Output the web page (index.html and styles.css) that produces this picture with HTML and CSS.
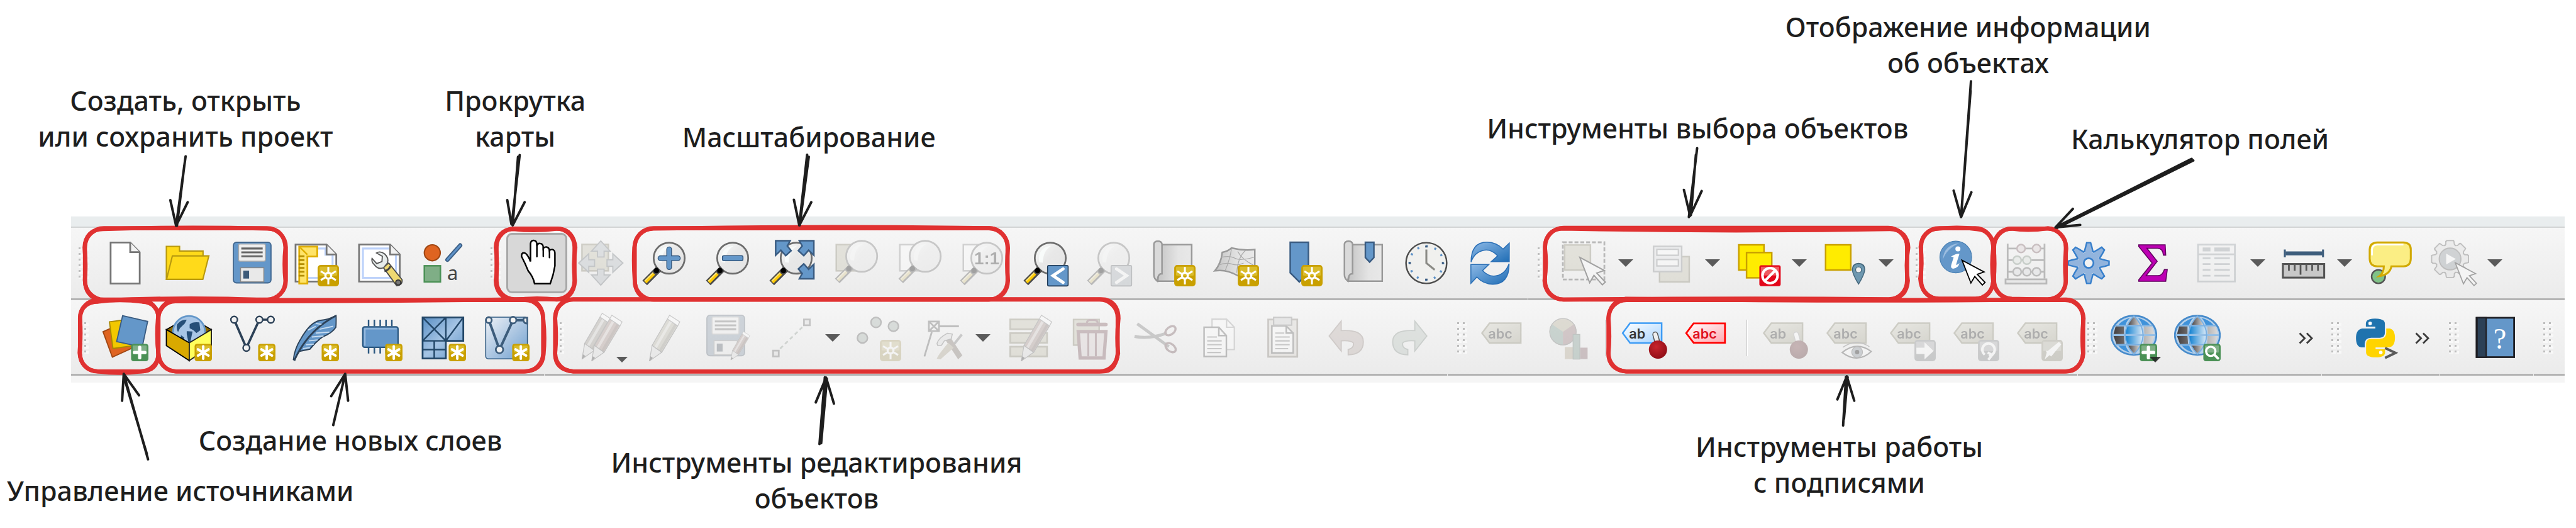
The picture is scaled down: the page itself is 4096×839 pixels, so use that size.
FILE: index.html
```html
<!DOCTYPE html>
<html lang="ru">
<head>
<meta charset="utf-8">
<title>Панели инструментов</title>
<link rel="stylesheet" href="styles.css">
</head>
<body>
<svg class="sprite" aria-hidden="true">
  <defs>
    <linearGradient id="g-lens" x1="0" y1="0" x2="1" y2="1"><stop offset="0" stop-color="#fafcfb"/><stop offset=".45" stop-color="#e8e8e8"/><stop offset="1" stop-color="#e4e4e4"/></linearGradient>
    <linearGradient id="g-sheet" x1="0" y1="0" x2="1" y2="0"><stop offset="0" stop-color="#c4c4c4"/><stop offset=".6" stop-color="#e4e4e4"/><stop offset="1" stop-color="#e8e8e8"/></linearGradient>
    <linearGradient id="g-blue" x1="0" y1="0" x2="1" y2="1"><stop offset="0" stop-color="#5a8fc4"/><stop offset=".5" stop-color="#a5c4e4"/><stop offset="1" stop-color="#6497c9"/></linearGradient>
    <linearGradient id="g-gpx" x1="0" y1="0" x2="1" y2="1"><stop offset="0" stop-color="#eef1f6"/><stop offset="1" stop-color="#6f9fcf"/></linearGradient>
    <linearGradient id="g-cell" x1="0" y1="0" x2="1" y2="0"><stop offset="0" stop-color="#0f7fd0"/><stop offset="1" stop-color="#d8e8f6"/></linearGradient>
    <linearGradient id="g-dark" x1="0" y1="0" x2="1" y2="0"><stop offset="0" stop-color="#433f40"/><stop offset="1" stop-color="#dcdcdc"/></linearGradient>
    <linearGradient id="g-arrow" x1="0" y1="0" x2="1" y2="1"><stop offset="0" stop-color="#8db9e6"/><stop offset="1" stop-color="#1f6db5"/></linearGradient>
    <linearGradient id="g-ab" x1="0" y1="0" x2="1" y2="1"><stop offset="0" stop-color="#ffffff"/><stop offset="1" stop-color="#a8d4ff"/></linearGradient>
    <linearGradient id="g-red" x1="0" y1="0" x2="1" y2="1"><stop offset="0" stop-color="#ffffff"/><stop offset="1" stop-color="#ffa8b0"/></linearGradient>
    <linearGradient id="g-tag" x1="0" y1="0" x2="1" y2="1"><stop offset="0" stop-color="#d4d2a8"/><stop offset="1" stop-color="#a8a060"/></linearGradient>
    <radialGradient id="g-ball" cx=".4" cy=".35" r=".7"><stop offset="0" stop-color="#c8242c"/><stop offset="1" stop-color="#8e0d16"/></radialGradient>
  </defs>

  <symbol id="badge-gear" viewBox="0 0 11 11">
    <rect width="11" height="11" rx="1.6" fill="#c9a000"/><rect x=".9" y=".9" width="9.2" height="4.6" rx=".6" fill="#dabc2b"/>
    <g stroke="#fff" stroke-width="1" fill="none"><circle cx="5.5" cy="5.5" r="1.5" stroke-width="1.1"/><path d="M5.5 1v2.6M5.5 7.4V10M1.6 3.2l2.3 1.4M7.1 6.4l2.3 1.4M9.4 3.2L7.1 4.6M3.9 6.4L1.6 7.8"/></g>
  </symbol>
  <symbol id="badge-star" viewBox="0 0 9 9">
    <rect width="9" height="9" rx="1.4" fill="#c9a000"/><rect x=".9" y=".9" width="7.2" height="3.6" rx=".5" fill="#dabc2b"/>
    <g stroke="#fff" stroke-width="1.3" stroke-linecap="round"><path d="M4.5 1.3v6.4M1.8 2.9l5.4 3.2M7.2 2.9L1.8 6.1"/></g>
  </symbol>
  <symbol id="badge-green" viewBox="0 0 9 9"><rect width="9" height="9" rx="1.4" fill="#4b9156"/><rect x=".9" y=".9" width="7.2" height="3.6" rx=".4" fill="#80b088"/></symbol>
  <symbol id="badge-plain" viewBox="0 0 11 11"><rect width="11" height="11" rx="1.6" fill="#7a8086"/><rect x=".9" y=".9" width="9.2" height="4.8" rx=".5" fill="#a4a9ad"/></symbol>
  <symbol id="lens" viewBox="0 0 24 24">
    <circle cx="14.6" cy="9.5" r="8" fill="url(#g-lens)" stroke="#6d6d6d" stroke-width=".9"/>
    <path d="M8.9 11.5C8 6.5 11 3.4 15 3.2 12.500 5 11 6.800 10.700 11.800Z" fill="#f8fbfa"/>
    <path d="M9.300 14.900L2 22.200" stroke="#4c4c4c" stroke-width="3.400"/><path d="M6.700 17.400L2.300 21.800" stroke="#ffcb05" stroke-width="1.800"/><path d="M6.300 17L2 21.300" stroke="#ffe680" stroke-width=".6"/><circle cx="8" cy="15.900" r="1.400"/>
  </symbol>
  <symbol id="cursor" viewBox="0 0 13 14"><path d="M.6.500L5.200 12.300 7.200 8.900 11.100 13.300 12.500 12 8.500 7.800 12 6.600Z" fill="#fff" stroke="#000" stroke-width=".6"/></symbol>
  <symbol id="scroll" viewBox="0 0 24 24">
    <path d="M6.500 2.500H22V21.300H4.500Z" fill="url(#g-sheet)" stroke="#999" stroke-width=".8"/>
    <path d="M2.500 2.200Q2.700.700 4.600.700T6.700 2.200V17.500Q4.500 17.300 4.300 21.300 2.500 20 2.500 18Z" fill="#dadada" stroke="#999" stroke-width=".8"/>
  </symbol>
  <symbol id="pencil" viewBox="0 0 24 24">
    <path d="M7.400 23.900L8.800 15.800 13.800 19.400Z" fill="#ddd" stroke="#666" stroke-width=".4"/>
    <path d="M8.800 15.800L16.700 2.200 22 5.800 13.800 19.400Z" fill="currentColor" stroke="#666" stroke-width=".4"/>
    <path d="M10.600 16.900L18.500 3.400" stroke="#fff" stroke-opacity=".5" stroke-width="1.400"/><path d="M13 18.600L21 5" stroke="#000" stroke-opacity=".2" stroke-width="1.400"/>
    <path d="M16.700 2.200L17.800.300 23.100 3.700 22 5.800Z" fill="#fff" stroke="#777" stroke-width=".4"/><path d="M7.400 23.900l.5-2.500 1.300.9z" fill="#333"/>
  </symbol>
  <symbol id="disk" viewBox="0 0 24 24">
    <rect x="2.300" y="1.300" width="19.400" height="20.900" rx="1.600" fill="#6497c9" stroke="#416891" stroke-width=".6"/>
    <rect x="5" y="2.200" width="13.800" height="8.800" rx=".7" fill="#eee" stroke="#aaa" stroke-width=".5"/><path d="M6.400 4.500h11M6.400 6.500h11M6.400 8.500h11" stroke="#666"/>
    <rect x="6" y="14.400" width="12" height="7.300" fill="#e9e9e9" stroke="#888" stroke-width=".5"/><rect x="7.400" y="15.900" width="3" height="4.100" fill="#3d5a78"/>
  </symbol>
  <symbol id="tag" viewBox="0 0 24 24"><path d="M.8 9.500L4.700 4.400H20.800V14.600H4.700Z" fill="url(#g-tag)" stroke="#87803e" stroke-width=".8"/></symbol>
  <symbol id="globe" viewBox="0 0 24 24">
    <ellipse cx="12" cy="10.600" rx="11.600" ry="10.100" fill="#b5d0ea" stroke="#478bcb" stroke-width=".9"/>
    <path d="M7.900 5.900H16.400V10H7.600ZM7.600 11H16.600V15.200H8Z" fill="url(#g-cell)"/>
    <path d="M2.600 6H6.900V10H1.500ZM1.500 11H6.900L7.200 15.200H3ZM17.200 6H21.300L22.600 10H17.400ZM17.300 11H22.600L21.200 15.200H17Z" fill="url(#g-dark)"/>
    <path d="M12 1.300Q14.500 3 15 5.300H8.800Q9.800 2.800 12 1.300ZM8.900 16H15.300Q14 18.500 12 19.800 10 18.500 8.900 16Z" fill="url(#g-dark)"/>
    <path d="M4 5.300Q6 2.800 10 1.600 8.300 3.200 7.700 5.300ZM16.300 5.300Q15.500 3 14 1.600 18 2.600 20.200 5.300ZM4 16H7.800Q8.300 18 10 19.600 6 18.500 4 16Z" fill="#3f92da"/>
    <path d="M2.500 5.700H21.500M.800 10.500H23.200M2.600 15.500H21.400" stroke="#7ab0e2" stroke-width=".6"/>
    <path d="M12 .600Q3 10.500 12 20.500M12 .600Q21.500 10.500 12 20.500" fill="none" stroke="#7ab0e2" stroke-width=".6"/>
  </symbol>
  <symbol id="caret" viewBox="0 0 24 12"><path d="M0 0H24L12 12Z" fill="#5a5a5a"/></symbol>
</svg>

<main class="diagram">
  <div class="toolbars">
    <div class="row row-top">
      <div class="group">
        <span class="grip"></span>
        <button class="tool" aria-label="Создать"><svg viewBox="0 0 24 24"><path d="M4.500 1.400H14.600L19.500 6.400V22.600H4.500Z" fill="#fff" stroke="#767676" stroke-width=".9"/><path d="M14.600 1.400V6.400H19.500" fill="#f2f2f2" stroke="#767676" stroke-width=".9"/></svg></button>
        <button class="tool" aria-label="Открыть"><svg viewBox="0 0 24 24"><g fill="#ffda1a" stroke="#b8990f" stroke-width=".7"><path d="M.5 20.400V3.400H7.300V5.800H19.400V9L15 20.400Z"/><path d="M.6 20.400L3.600 8.300H22.400L19.300 20.400Z"/></g></svg></button>
        <button class="tool" aria-label="Сохранить"><svg viewBox="0 0 24 24"><use href="#disk"/></svg></button>
        <button class="tool" aria-label="Создать макет"><svg viewBox="0 0 24 24"><path d="M1.600 2.500H17.600L22.600 7.600V21.500H1.600Z" fill="#fff" stroke="#767676" stroke-width=".9"/><path d="M13 4.500H17V7.700H20.700V13M8 19.600H14" fill="none" stroke="#bdd2fa"/><path d="M17.600 2.500V7.600H22.600" fill="#f2f2f2" stroke="#767676" stroke-width=".9"/><path d="M3.500 3.500H12.800V8.600H7.700V22.600H3.500Z" fill="#ffe46a" stroke="#dfae00" stroke-width=".9"/><path d="M4 4L7.700 7.700" stroke="#dfae00" stroke-width=".8"/><path d="M3.200 8.500H6.200M3.200 10.500H6.200M3.200 12.500H6.200M3.200 14.500H6.200M3.200 16.500H6.200M3.200 18.500H6.200" stroke="#b48e00" stroke-width=".9"/><use href="#badge-gear" x="13" y="13" width="11" height="11"/></svg></button>
        <button class="tool" aria-label="Менеджер макетов"><svg viewBox="0 0 24 24"><path d="M1.600 2.500H17.600L22.600 7.600V21.500H1.600Z" fill="#fff" stroke="#767676" stroke-width=".9"/><path d="M17 4.500H3.600V19.600H20.600V8" fill="none" stroke="#bdd2fa"/><path d="M17.600 2.500V7.600H22.600" fill="#f2f2f2" stroke="#767676" stroke-width=".9"/><path d="M14 14.200L16.900 12 23.800 20.600Q24 23.500 21 23.700Z" fill="#efd972" stroke="#4a4a4a" stroke-width=".6"/><path d="M10.600 6.800Q12.500 5.600 14.800 7.300 17.200 9.500 16.200 12L14.300 14.400Q11.500 15.500 9.600 13 7.800 11.500 8.300 9.600L10.700 12.300 13.400 11.200 13.600 8.500Z" fill="#e7eceb" stroke="#555" stroke-width=".6"/><path d="M14.700 16.200Q16.900 15.700 17.800 13.700" stroke="#444" fill="none"/><circle cx="21.800" cy="22" r="1.300" fill="#777" stroke="#333" stroke-width=".6"/></svg></button>
        <button class="tool" aria-label="Менеджер стилей"><svg viewBox="0 0 24 24"><circle cx="6.600" cy="6.700" r="4.100" fill="#df6421" stroke="#a04714" stroke-width=".7"/><path d="M14.400 10.300L21 2.900" stroke="#3c5f85" stroke-width="2.200" stroke-linecap="round"/><path d="M14.400 10.300L21 2.900" stroke="#5e92c8" stroke-width="1" stroke-linecap="round"/><rect x="2.500" y="13.400" width="8.300" height="8.300" fill="#7fae86" stroke="#4b9156" stroke-width=".8"/><text class="style-letter" x="14.300" y="20.600">a</text></svg></button>
      </div>
      <div class="group">
        <span class="grip"></span>
        <button class="tool tool-on" aria-label="Прокрутка карты"><svg viewBox="0 0 24 24"><path d="M10.700 22.600Q10 19 7.400 16 6 12.500 4 8.600 3.800 6.500 5.600 6.800 7.200 7.500 8.600 11.200V2Q8.800.300 10.200.300T11.900 2V3Q12.300 1.800 13.500 1.900 15.100 2 15.200 4V4.400Q15.800 3.600 16.800 3.700 18.200 3.900 18.400 5.600 19 4.900 19.900 5 21.200 5.300 21.200 7V13.400Q20.500 18 18.800 22.600Z" fill="#fff" stroke="#000" stroke-width=".8"/><path d="M11.900 2.500V8.700M15.200 4V8.500M18.400 5.500V9.200" stroke="#000" stroke-width=".8" stroke-linecap="round"/></svg></button>
        <button class="tool" disabled aria-label="Прокрутка к выделенному"><svg viewBox="0 0 24 24"><rect x="2.400" y="2.400" width="13.600" height="13.600" fill="#c8c084" stroke="#8a8040" stroke-width=".8"/><g fill="#a4b8ca" stroke="#5c7080" stroke-width=".6"><path d="M12.100.600L16.900 5.900H13.800V8.900H10.400V5.900H7.300Z"/><path d="M12.100 23.400L16.900 18.100H13.800V15.100H10.400V18.100H7.300Z"/><path d="M.700 12L5.900 7.200V10.300H8.900V13.700H5.900V16.800Z"/><path d="M23.500 12L18.300 7.200V10.300H15.300V13.700H18.300V16.800Z"/></g></svg></button>
        <button class="tool" aria-label="Увеличить"><svg viewBox="0 0 24 24"><use href="#lens"/><path d="M14.600 4.900V14.100M10.100 9.500H19.100" stroke="#33587f" stroke-width="2.900" stroke-linecap="round"/><path d="M14.600 4.900V14.100M10.100 9.500H19.100" stroke="#6497c9" stroke-width="2" stroke-linecap="round"/></svg></button>
        <button class="tool" aria-label="Уменьшить"><svg viewBox="0 0 24 24"><use href="#lens"/><rect x="9.300" y="8.200" width="10.600" height="2.600" rx=".8" fill="#6497c9" stroke="#33587f" stroke-width=".5"/></svg></button>
        <button class="tool" aria-label="Полный охват"><svg viewBox="0 0 24 24"><use href="#lens"/><g fill="#6497c9" stroke="#3a5c82" stroke-width=".8"><path d="M4 .500H11.500L10 3.200 12 5.600 9.200 8.200 6.700 5.400 4 8Z"/><path d="M23.700.500H16.200L17.700 3.200 15.700 5.600 18.500 8.200 21 5.400 23.700 8Z"/><path d="M23.700 20.100H16.200L17.700 17.400 15.700 15 18.500 12.400 21 15.200 23.700 12.600Z"/></g></svg></button>
        <button class="tool" disabled aria-label="Увеличить до выделенного"><svg viewBox="0 0 24 24"><rect x="2.500" y="2.500" width="13.500" height="13.500" fill="#c8c084" stroke="#8a8040" stroke-width=".8"/><use href="#lens" x="1" y="-1"/></svg></button>
        <button class="tool" disabled aria-label="Увеличить до слоя"><svg viewBox="0 0 24 24"><rect x="2.500" y="2.500" width="13.500" height="13.500" fill="#fff" stroke="#888" stroke-width=".8"/><use href="#lens" x="1" y="-1"/></svg></button>
        <button class="tool" disabled aria-label="Исходный масштаб"><svg viewBox="0 0 24 24"><rect x="2.500" y="2.500" width="13.500" height="13.500" fill="#fff" stroke="#888" stroke-width=".8"/><use href="#lens"/><text class="ratio" x="14.600" y="12.800">1:1</text></svg></button>
        <button class="tool" aria-label="Предыдущий охват"><svg viewBox="0 0 24 24"><use href="#lens"/><rect x="13.200" y="13.200" width="10.600" height="10.600" rx=".7" fill="#6497c9" stroke="#1f3a56" stroke-width=".5"/><path d="M21.200 15L16 18.500 21.200 22" fill="none" stroke="#fff" stroke-width="1.600" stroke-linecap="round"/></svg></button>
        <button class="tool" disabled aria-label="Следующий охват"><svg viewBox="0 0 24 24"><use href="#lens"/><rect x="13.200" y="13.200" width="10.600" height="10.600" rx=".7" fill="#9ab0c4" stroke="#4a5a68" stroke-width=".5"/><path d="M16 15L21.200 18.500 16 22" fill="none" stroke="#fff" stroke-width="1.600" stroke-linecap="round"/></svg></button>
        <button class="tool" aria-label="Новая карта"><svg viewBox="0 0 24 24"><use href="#scroll"/><use href="#badge-gear" x="13" y="13" width="11" height="11"/></svg></button>
        <button class="tool" aria-label="Новая 3D карта"><svg viewBox="0 0 24 24"><path d="M9.800 4.200Q16 5.800 21.800 5V18L13 18.500Q7 15 1.200 16Q4.500 12 5 6.500Q8 6 9.800 4.200Z" fill="url(#g-sheet)" stroke="#999" stroke-width=".8"/><path d="M4.500 9Q9 8 11.500 9.500T21.500 9M3 13Q7 11.500 10 12.500T16 12M9.800 4.500Q9 10 6.500 16M17 5.500Q13 9 12.500 17M13 6Q15 10 21 13" fill="none" stroke="#aaa" stroke-width=".4"/><use href="#badge-gear" x="13" y="13" width="11" height="11"/></svg></button>
        <button class="tool" aria-label="Новая закладка"><svg viewBox="0 0 24 24"><path d="M7.300 1.300H16.700V17L12 21.700 7.300 17Z" fill="#6497c9" stroke="#3a5c82" stroke-width=".8"/><use href="#badge-gear" x="13" y="13" width="11" height="11"/></svg></button>
        <button class="tool" aria-label="Закладки"><svg viewBox="0 0 24 24"><use href="#scroll"/><path d="M13.300 1.300H17.700V9.200L15.500 11.500 13.300 9.200Z" fill="#6497c9" stroke="#3a5c82" stroke-width=".8"/></svg></button>
        <button class="tool" aria-label="Время"><svg viewBox="0 0 24 24"><circle cx="12" cy="12" r="10.500" fill="#f0f0ee" stroke="#4d4d4d" stroke-width=".8"/><circle cx="12" cy="12" r="8.700" fill="none" stroke="#5e92c8" stroke-width="1.100" stroke-dasharray="1 3.555" stroke-dashoffset=".5"/><path d="M12 3V4M12 20V21M3 12H4M20 12H21" stroke="#3a5c82" stroke-width="1.200"/><path d="M12 5V12L16.300 15.500" fill="none" stroke="#8b8b86" stroke-width="1"/></svg></button>
        <button class="tool" aria-label="Обновить"><svg viewBox="0 0 24 24"><g fill="url(#g-arrow)" stroke="#2a6fb6" stroke-width=".5"><path d="M2.300 11.500Q2.300 1.200 10.500 1.200 15.500 1.300 18.800 4.800L22 1.700V11.300H12.700L16 8.300Q12.500 4.500 8.500 5.500 4 6.500 2.300 11.500Z"/><path d="M21.900 12.300Q22 22.900 13.500 22.900 8.600 22.800 5.300 19.200L2.200 22.500V12.700H11.500L8.200 15.900Q11.700 19.500 15.600 18.500 20 17.500 21.900 12.300Z"/></g></svg></button>
      </div>
      <div class="group">
        <span class="grip"></span>
        <button class="tool" disabled aria-label="Выбрать объекты"><svg viewBox="0 0 24 24"><rect x="1" y="1.300" width="21.400" height="19.200" fill="none" stroke="#444" stroke-width=".9" stroke-dasharray="2 1"/><rect x="1.900" y="2.700" width="13.300" height="12.900" fill="#c8c084" stroke="#8a8040" stroke-width=".8"/><use href="#cursor" x="9" y="8.500" width="14.500" height="15.500"/></svg></button>
        <button class="drop" aria-label="Варианты выбора"><svg viewBox="0 0 24 12"><use href="#caret"/></svg></button>
        <button class="tool" disabled aria-label="Выбрать по значению"><svg viewBox="0 0 24 24"><rect x="6.100" y="8.700" width="15.300" height="13" fill="#c8c084" stroke="#8a8040" stroke-width=".8"/><rect x="3" y="3.400" width="14.500" height="13" fill="#dde3ea" stroke="#7b868f" stroke-width=".8"/><path d="M4.700 4.900H15.800V8H4.700ZM4.700 10.200H15.800V13.500H4.700Z" fill="#fff" stroke="#7b868f" stroke-width=".7"/></svg></button>
        <button class="drop" aria-label="Варианты выбора по значению"><svg viewBox="0 0 24 12"><use href="#caret"/></svg></button>
        <button class="tool" aria-label="Снять выделение"><svg viewBox="0 0 24 24"><g fill="#ffec00" stroke="#c9a000" stroke-width=".8"><rect x="2.200" y="2.600" width="13" height="13"/><rect x="6.200" y="6.600" width="13" height="13"/></g><rect x="12.800" y="13.100" width="11" height="10.800" rx="1" fill="#e3061a"/><rect x="13.600" y="13.900" width="9.400" height="4.500" fill="#ee5a60"/><circle cx="18.300" cy="18.500" r="3.900" fill="none" stroke="#fff" stroke-width="1.300"/><path d="M15.700 21.100L20.900 15.900" stroke="#fff" stroke-width="1.300"/></svg></button>
        <button class="drop" aria-label="Варианты снятия выделения"><svg viewBox="0 0 24 12"><use href="#caret"/></svg></button>
        <button class="tool" aria-label="Выбрать по расположению"><svg viewBox="0 0 24 24"><rect x="2.200" y="2.600" width="13" height="13" fill="#ffec00" stroke="#c9a000" stroke-width=".8"/><path d="M19.200 22.800Q16.200 18 16 15.400 16.200 12.300 19.200 12.200 22.300 12.300 22.400 15.400 22.200 18 19.200 22.800Z" fill="#6e98b0" stroke="#44677c" stroke-width=".5"/><circle cx="19.200" cy="15.500" r="1.500" fill="#f0f0f0" stroke="#44677c" stroke-width=".4"/></svg></button>
        <button class="drop" aria-label="Варианты выбора по расположению"><svg viewBox="0 0 24 12"><use href="#caret"/></svg></button>
      </div>
      <div class="group grow">
        <span class="grip"></span>
        <button class="tool" aria-label="Информация об объекте"><svg viewBox="0 0 24 24"><circle cx="8.700" cy="8.900" r="8.200" fill="#6497c9" stroke="#4a80b3" stroke-width=".4"/><path d="M2 10.300Q2.500 2.600 10.500 1.800 4 4.500 2 10.300Z" fill="#9bbde0"/><circle cx="9.800" cy="4.700" r="1.300" fill="#fff"/><path d="M6.200 8.700Q8.500 7 10.600 7.200L8.800 12.900Q9.500 13.100 10.600 12 10 14.600 7.300 14.900 5.800 14.700 6.400 12.800L7.600 9Z" fill="#fff"/><use href="#cursor" x="11.300" y="10" width="13" height="14"/></svg></button>
        <button class="tool" disabled aria-label="Калькулятор полей"><svg viewBox="0 0 24 24"><g fill="none" stroke="#4b4b4b" stroke-width=".9"><path d="M2.700 2V20M21.700 2V20M2.700 4.500H21.700M2.700 10.500H21.700M2.700 16.500H21.700"/><path d="M1.600 20.400H22.700V22.600H1.600Z" fill="#ddd"/></g><g stroke-width=".8"><g fill="#e8c8cc" stroke="#a0485a"><circle cx="9.600" cy="4.500" r="2.100"/><circle cx="17.600" cy="4.500" r="2.100"/></g><g fill="#cfe4d2" stroke="#5a9066"><circle cx="7.600" cy="10.500" r="2.100"/><circle cx="12.600" cy="10.500" r="2.100"/></g><g fill="#d4dbe2" stroke="#555"><circle cx="7.600" cy="16.500" r="2.100"/><circle cx="12.600" cy="16.500" r="2.100"/><circle cx="17.600" cy="16.500" r="2.100"/></g></g></svg></button>
        <button class="tool" aria-label="Инструменты обработки"><svg viewBox="0 0 24 24"><g transform="translate(11.700 12)"><g fill="#92b4dd" stroke="#377fcb" stroke-width=".8"><g id="teeth"><path id="tooth" d="M-2.300-5.500L-1.500-8.500-1-10.500H1L1.600-8.500 2.300-5.500"/><use href="#tooth" transform="rotate(90)"/><use href="#tooth" transform="rotate(180)"/><use href="#tooth" transform="rotate(270)"/></g><use href="#teeth" transform="rotate(45)"/></g><circle r="5.700" fill="#92b4dd"/><circle r="2.500" fill="#f2f2f2" stroke="#377fcb" stroke-width=".9"/></g></svg></button>
        <button class="tool" aria-label="Статистика"><svg viewBox="0 0 24 24"><path d="M4.800 2.600H18.400L18.700 7.900H17.500Q17.100 4.400 14.500 4.400H9L14.300 11.100 8.600 18.500H14.800Q17 18.400 18 15.300H19.500L18.700 21.400H4.800V20.600L11.700 12 4.800 3.500Z" fill="#bd00b3" stroke="#620060" stroke-width=".5"/></svg></button>
        <button class="tool" disabled aria-label="Таблица атрибутов"><svg viewBox="0 0 24 24"><rect x="2.600" y="2.500" width="19" height="19" fill="#eef1f4" stroke="#7d94a6" stroke-width=".9"/><path d="M2.600 7.500H21.600M5 9.500H9M11 9.500H19M5 12.500H9M11 12.500H19M5 15.500H9M11 15.500H19M5 18.500H9M11 18.500H19" stroke="#7d94a6" stroke-width=".9"/><path d="M5 5H9M11 5H19" stroke="#7d94a6" stroke-width="2"/></svg></button>
        <button class="drop" aria-label="Варианты таблицы"><svg viewBox="0 0 24 12"><use href="#caret"/></svg></button>
        <button class="tool" aria-label="Измерить"><svg viewBox="0 0 24 24"><path d="M3 7H22" stroke="#3d5d7c" stroke-width="2"/><path d="M2.600 5V9M22.300 5V9" stroke="#3d5d7c"/><rect x="1.600" y="12.500" width="21.300" height="7" fill="#c8c8c8" stroke="#555"/><path d="M4.700 12V16M7.700 12V16M10.700 12V18M13.700 12V16M16.700 12V16M19.700 12V16" stroke="#555" stroke-width=".9"/></svg></button>
        <button class="drop" aria-label="Варианты измерения"><svg viewBox="0 0 24 12"><use href="#caret"/></svg></button>
        <button class="tool" aria-label="Подсказки карты"><svg viewBox="0 0 24 24"><circle cx="6.100" cy="19" r="3.500" fill="#80c287" stroke="#555" stroke-width=".8"/><path d="M5.500 1.400H19Q22.800 1.500 22.800 5V9.800Q22.700 13.600 19 13.700H12.800Q12 18 6.600 18.700 8.900 17 8.900 13.700H5.500Q1.700 13.600 1.600 9.800V5Q1.700 1.500 5.500 1.400Z" fill="#fbee84" stroke="#d1a900" stroke-width="1"/><path d="M2.800 8V5Q3 2.700 5.500 2.500H19" fill="none" stroke="#fff" stroke-width=".9"/></svg></button>
        <button class="tool" disabled aria-label="Выполнить действие"><svg viewBox="0 0 24 24"><g transform="translate(10.300 9.900)"><g fill="#ddd" stroke="#555" stroke-width=".6"><g id="cogs"><path id="cog" d="M-3.200-6.500L-2.200-7.600V-9H-2L-1.800-9.500H1.800L2-9 2.200-7.600 3.200-6.500"/><use href="#cog" transform="rotate(90)"/><use href="#cog" transform="rotate(180)"/><use href="#cog" transform="rotate(270)"/></g><use href="#cogs" transform="rotate(45)"/></g><circle r="7" fill="#ddd"/><circle r="5.600" fill="#7d94a6" stroke="#555" stroke-width=".6"/><path d="M-2-2.800L3 0-2 2.800Z" fill="#fff"/></g><use href="#cursor" x="12.400" y="11.300" width="12" height="13"/></svg></button>
        <button class="drop" aria-label="Варианты действий"><svg viewBox="0 0 24 12"><use href="#caret"/></svg></button>
      </div>
    </div>

    <div class="row row-bottom">
      <div class="group">
        <span class="grip"></span>
        <button class="tool" aria-label="Управление источниками"><svg viewBox="0 0 24 24"><path d="M.600 8.800L10 4.600 15.500 17.300 5.400 21.900Z" fill="#df6421" stroke="#a04714" stroke-width=".6"/><path d="M3.900 3.700L17 2 18 15.800 5.700 17.400Z" fill="#f2c800" stroke="#a98900" stroke-width=".6"/><path d="M10.700.500L23.600 3.500 20.800 16.700 7.600 13.900Z" fill="#6497c9" stroke="#3a5c82" stroke-width=".6"/><use href="#badge-green" x="15" y="15" width="9" height="9"/><path d="M19.500 16.800V22.200M16.800 19.500H22.200" stroke="#fff" stroke-width="1.700" stroke-linecap="round"/></svg></button>
        <button class="tool" aria-label="Слой GeoPackage"><svg viewBox="0 0 24 24"><path d="M.500 7.700L12.200 1 23.700 7.700 12.200 14.300Z" fill="#8a6700" stroke="#000" stroke-width=".5"/><circle cx="12.200" cy="9" r="8.300" fill="#a8c6e6" stroke="#6497c9" stroke-width=".9"/><path d="M6 5Q8 2.500 11 2.600L10 4.500 7.500 7 6.500 9Q5.500 7 6 5ZM12.500 5Q14 3.600 17.500 4L18 8 16 9.500 14.500 8 12.500 7ZM11 8.500L14 8.700 13.500 11 12.800 14.500 11.800 14 11 10ZM8 10.500L9.800 11.800 9 13.500 8 12Z" fill="#264f78"/><path d="M.500 7.700L12.300 14.500V23.700L.500 16Z" fill="#d9a900" stroke="#000" stroke-width=".6"/><path d="M23.700 7.700L12.300 14.500V23.700L23.700 16Z" fill="#ffff5c" stroke="#222" stroke-width=".6"/><use href="#badge-star" x="15" y="15" width="9" height="9"/></svg></button>
        <button class="tool" aria-label="Слой Shapefile"><svg viewBox="0 0 24 24"><path d="M2.700 2.600L9 17.100 15.700 2.600H21.800" fill="none" stroke="#2c4157" stroke-width="1.200"/><g fill="#f2f2f2" stroke="#2c4157" stroke-width=".8"><circle cx="2.700" cy="2.600" r="1.700"/><circle cx="9" cy="17.100" r="1.700"/><circle cx="15.700" cy="2.600" r="1.700"/><circle cx="21.600" cy="2.600" r="1.700"/></g><use href="#badge-star" x="15" y="15" width="9" height="9"/></svg></button>
        <button class="tool" aria-label="Слой SpatiaLite"><svg viewBox="0 0 24 24"><path d="M22.500.500Q22.600 4 22.400 6.500 20.500 9.500 15.500 11.500 12 14 9 17.800L4 18.800Q2.500 19 1.200 23.500L.500 23.200Q1 18 4 13 9 4 14 3 19 2.500 22.500.500Z" fill="#6497c9" stroke="#2c4157" stroke-width=".6"/><path d="M22.400.600Q8 8 1 23.500" fill="none" stroke="#2c4157" stroke-width=".9"/><path d="M14 7.500L21 6M12 9.500L19 9M10 11.500L16 11M8.500 13.500L13 13M7 15.500L11 15.200M5.500 17.500L9 17M8 8L12 6M12 4.500L15 5" stroke="#c8dcf0" stroke-width=".6"/><use href="#badge-star" x="15" y="15" width="9" height="9"/></svg></button>
        <button class="tool" aria-label="Временный слой"><svg viewBox="0 0 24 24"><path d="M6.500 2.600V6M9.500 2.600V6M12.500 2.600V6M15.500 2.600V6M18.500 2.600V6M6.500 17V20M9.500 17V20M12.500 17V20M15.500 17V20M18.500 17V20" stroke="#2c5880" stroke-width=".8"/><rect x="3.500" y="6.300" width="18.200" height="10.500" rx="1" fill="#6497c9" stroke="#2c5880" stroke-width=".7"/><path d="M4.600 16V7.300H21" stroke="#9bbde0" stroke-width=".7" fill="none"/><use href="#badge-star" x="15" y="15" width="9" height="9"/></svg></button>
        <button class="tool" aria-label="Слой сетки"><svg viewBox="0 0 24 24"><path d="M1.600 1.400H22.600V13.500H13.600V22.600H1.600Z" fill="url(#g-blue)" stroke="#234768" stroke-width=".9"/><path d="M1.600 13.500H13.600V1.400M1.600 1.400L13.600 13.500 22.600 1.400M13.600 1.400L1.600 13.500M1.600 18H13.600M7.600 13.500V22.600" fill="none" stroke="#234768" stroke-width=".8"/><use href="#badge-star" x="15" y="15" width="9" height="9"/></svg></button>
        <button class="tool" aria-label="Слой GPX"><svg viewBox="0 0 24 24"><rect x="1.400" y="1.300" width="21.500" height="21.500" rx="1.400" fill="url(#g-gpx)" stroke="#2c5880" stroke-width=".5"/><path d="M3 2.800L8.500 18 15.500 2.800H22.500" fill="none" stroke="#3d5d7c" stroke-width="1.300"/><g fill="#f2f2f2" stroke="#3d5d7c" stroke-width=".9"><circle cx="3" cy="2.800" r="1.500"/><circle cx="8.500" cy="18" r="1.900"/><circle cx="15.500" cy="2.800" r="1.700"/><path d="M22.800 4.600A1.900 1.900 0 0 1 21.200 1.600H22.800Z"/></g><use href="#badge-star" x="15" y="15" width="9" height="9"/></svg></button>
      </div>
      <div class="group">
        <span class="grip"></span>
        <button class="tool with-corner" aria-label="Текущие правки"><svg class="dim" viewBox="0 0 24 24"><g color="#a0907a"><use href="#pencil" x="-5" y="-1"/></g><g color="#c4806a"><use href="#pencil"/></g></svg><svg class="corner" viewBox="0 0 24 12"><use href="#caret"/></svg></button>
        <button class="tool" disabled aria-label="Режим редактирования"><svg viewBox="0 0 24 24"><g color="#b8b080"><use href="#pencil" x="-3"/></g></svg></button>
        <button class="tool" disabled aria-label="Сохранить правки"><svg viewBox="0 0 24 24"><use href="#disk" x="-1" y="-1"/><g color="#c08070"><use href="#pencil" x="9" y="8.500" width="15" height="15"/></g></svg></button>
        <button class="tool" disabled aria-label="Добавить линию"><svg viewBox="0 0 24 24"><path d="M6.300 17.500L17.700 6.500" stroke="#809e86" stroke-dasharray="2 1.500" stroke-width=".9"/><path d="M2.700 18.500H5.600V21.500H2.700ZM18.600 2.500H21.600V5.500H18.600Z" fill="#ddd" stroke="#666" stroke-width=".9"/></svg></button>
        <button class="drop" aria-label="Варианты оцифровки"><svg viewBox="0 0 24 12"><use href="#caret"/></svg></button>
        <button class="tool" disabled aria-label="Добавить точки"><svg viewBox="0 0 24 24"><g fill="#8fb49e" stroke="#555" stroke-width=".8"><circle cx="11" cy="4" r="2.600"/><circle cx="20" cy="6" r="2.600"/><circle cx="4" cy="12" r="2.600"/></g><use href="#badge-gear" x="13" y="13" width="11" height="11"/></svg></button>
        <button class="tool" disabled aria-label="Редактор вершин"><svg viewBox="0 0 24 24"><path d="M11 6H21M7 9L3.200 21.500" stroke="#555" stroke-width=".9"/><path d="M5.500 3.500H10.700V8.500H5.500ZM5.500 3.500L10.700 8.500M10.700 3.500L5.500 8.500" fill="none" stroke="#555" stroke-width=".9"/><path d="M22.500 10.200L17 17" stroke="#777" stroke-width="1.300"/><path d="M14 13L16.500 11.500 22.800 21 20.600 23Z" fill="#8a6a50"/><path d="M9.600 22.700Q10 21 15.500 14.500L18.300 17 11.500 23Z" fill="#b8a060"/><path d="M9.700 14.800Q10.500 12 15 9.600L17.600 10 17 12.500 13.500 13.500 12 15.800 10 15.800Z" fill="#ddd" stroke="#666" stroke-width=".5"/></svg></button>
        <button class="drop" aria-label="Варианты редактора вершин"><svg viewBox="0 0 24 12"><use href="#caret"/></svg></button>
        <button class="tool" disabled aria-label="Изменить атрибуты"><svg viewBox="0 0 24 24"><path d="M2.700 2.500H21.700V7.500H2.700ZM2.700 9.500H21.700V14.500H2.700ZM2.700 16.500H21.700V21.500H2.700Z" fill="#c8c084" stroke="#8a8040" stroke-width=".9"/><g color="#c08070"><use href="#pencil" x="1"/></g></svg></button>
        <button class="tool" disabled aria-label="Удалить"><svg viewBox="0 0 24 24"><rect x="2.600" y="2.500" width="13.200" height="13.200" fill="#c8c084" stroke="#8a8040" stroke-width=".8"/><path d="M9.500 4.500Q9.500 2.800 11 2.800H13.500Q15 2.800 15 4.500" fill="none" stroke="#b04052"/><rect x="4" y="4.100" width="16.200" height="1.900" rx=".9" fill="#b04052"/><path d="M5 8.700H19.300L18.300 22.300H6Z" fill="#e8c8cc" stroke="#b04052" stroke-width="1.700"/><path d="M10.200 9V21.500M14.100 9V21.500" stroke="#b04052" stroke-width="1"/></svg></button>
        <button class="tool" disabled aria-label="Вырезать"><svg viewBox="0 0 24 24"><path d="M2.700 4.700Q10 10 19 16.500M1.300 11.200Q9 12.800 18 9.500" stroke="#777" stroke-width="1.600" fill="none"/><ellipse cx="19.800" cy="8.300" rx="3" ry="1.900" transform="rotate(-38 19.800 8.300)" fill="none" stroke="#9a4452" stroke-width="1.100"/><ellipse cx="19.900" cy="17" rx="3" ry="1.900" transform="rotate(38 19.900 17)" fill="none" stroke="#9a4452" stroke-width="1.100"/></svg></button>
        <button class="tool" disabled aria-label="Копировать"><svg viewBox="0 0 24 24"><path d="M8.500 2.300H16L20 6.500V18H8.500Z" fill="#fff" stroke="#999" stroke-width=".7"/><path d="M16 2.300V6.500H20" fill="none" stroke="#999" stroke-width=".7"/><path d="M4.400 6.500H12L15.900 10.800V21.600H4.400Z" fill="#fff" stroke="#555" stroke-width=".8"/><path d="M12 6.500V10.800H15.900" fill="none" stroke="#555" stroke-width=".8"/><path d="M6 11.500H11M6 13.500H13.500M6 15.500H13.500M6 17.500H13.500M6 19.500H13" stroke="#777" stroke-width=".7"/></svg></button>
        <button class="tool" disabled aria-label="Вставить"><svg viewBox="0 0 24 24"><rect x="4.700" y="2.500" width="15" height="19.200" fill="#dcd2bc" stroke="#8a7458" stroke-width=".9"/><path d="M6.600 5.800H14L17.600 9.500V19.700H6.600Z" fill="#fff" stroke="#555" stroke-width=".8"/><path d="M14 5.800V9.500H17.600" fill="none" stroke="#555" stroke-width=".8"/><rect x="7.500" y="1.400" width="9.300" height="4" fill="#ccc" stroke="#777" stroke-width=".7"/><path d="M8.300 9.500H13M8.300 11.500H15.800M8.300 13.500H15.800M8.300 15.500H15.800M8.300 17.500H15" stroke="#777" stroke-width=".7"/></svg></button>
        <button class="tool" disabled aria-label="Отменить"><svg viewBox="0 0 24 24"><path d="M3.400 11L9.600 3.300V8.200Q21 7.500 21 14 21 20.500 13.200 20.700V18Q16.500 17 15.800 14.500 14.500 13.200 9.600 13.500V18.800Z" fill="#cca494" stroke="#a07868" stroke-width=".6"/></svg></button>
        <button class="tool" disabled aria-label="Вернуть"><svg viewBox="0 0 24 24"><path d="M21 11L14.800 3.300V8.200Q3.400 7.500 3.400 14 3.400 20.500 11.200 20.700V18Q7.900 17 8.600 14.500 9.900 13.200 14.800 13.500V18.800Z" fill="#a4c4b2" stroke="#70907c" stroke-width=".6"/></svg></button>
      </div>
      <div class="group">
        <span class="grip"></span>
        <button class="tool" disabled aria-label="Подписи слоя"><svg viewBox="0 0 24 24"><use href="#tag"/><text class="tag-text" x="4" y="12.300">abc</text></svg></button>
        <button class="tool" disabled aria-label="Диаграммы слоя"><svg viewBox="0 0 24 24"><circle cx="9.800" cy="8.800" r="7" fill="#c0a860"/><path d="M9.800 8.800V15.800A7 7 0 0 1 4 4.900Z" fill="#4ba080"/><path d="M9.800 8.800V15.800A7 7 0 0 0 15.600 4.900Z" fill="#c06068"/><circle cx="9.800" cy="8.800" r="6.800" fill="none" stroke="#666" stroke-width=".4"/><path d="M10.700 16.700H15V22.900H10.700Z" fill="#c8a058"/><path d="M15 10.200H18.500V22.900H15Z" fill="#4ba080" stroke="#407060" stroke-width=".4"/><path d="M18.700 17H22.500V22.900H18.700Z" fill="#b05060"/></svg></button>
        <span class="divider"></span>
        <button class="tool" aria-label="Закреплённые подписи"><svg viewBox="0 0 24 24"><path d="M.700 9.500L4.500 4.400H20.800V14.600H4.500Z" fill="url(#g-ab)" stroke="#3d9cf5" stroke-width=".8"/><text class="tag-text ink" x="4" y="12.300">ab</text><path d="M17.500 10.200L18.800 15" stroke="#555" stroke-width="3" stroke-linecap="round"/><path d="M17.500 10.200L18.800 15" stroke="#eee" stroke-width="2" stroke-linecap="round"/><circle cx="18.900" cy="18" r="4.700" fill="url(#g-ball)"/></svg></button>
        <button class="tool" aria-label="Неразмещённые подписи"><svg viewBox="0 0 24 24"><path d="M.700 9.500L4.500 4.500H20.700V14.500H4.500Z" fill="url(#g-red)" stroke="#f00" stroke-width=".9"/><text class="tag-text crimson" x="4" y="12.300">abc</text></svg></button>
        <span class="divider"></span>
        <button class="tool" disabled aria-label="Закрепить подпись"><svg viewBox="0 0 24 24"><use href="#tag"/><text class="tag-text" x="4" y="12.300">ab</text><path d="M17.500 10.200L18.800 15" stroke="#999" stroke-width="3" stroke-linecap="round"/><path d="M17.500 10.200L18.800 15" stroke="#fff" stroke-width="2" stroke-linecap="round"/><circle cx="18.900" cy="18" r="4.700" fill="url(#g-ball)"/></svg></button>
        <button class="tool" disabled aria-label="Показать подпись"><svg viewBox="0 0 24 24"><use href="#tag"/><text class="tag-text" x="4" y="12.300">abc</text><path d="M8.500 19.500Q16 13.500 23.500 19 16.500 25.500 8.500 19.500Z" fill="#fff" stroke="#444" stroke-width=".7"/><circle cx="16.200" cy="19.300" r="2.800" fill="#7590a8" stroke="#555" stroke-width=".4"/><circle cx="16.200" cy="19.300" r="1.100"/><path d="M8.800 16.800Q16 12 22.500 16.500" fill="none" stroke="#666" stroke-width=".5"/></svg></button>
        <button class="tool" disabled aria-label="Переместить подпись"><svg viewBox="0 0 24 24"><use href="#tag"/><text class="tag-text" x="4" y="12.300">abc</text><use href="#badge-plain" x="13" y="13" width="11" height="11"/><path d="M14 17H18.200V14.300L22.900 18.700 18.200 23V20.300H14Z" fill="#fff"/></svg></button>
        <button class="tool" disabled aria-label="Повернуть подпись"><svg viewBox="0 0 24 24"><use href="#tag"/><text class="tag-text" x="4" y="12.300">abc</text><use href="#badge-plain" x="13" y="13" width="11" height="11"/><path d="M16.500 20.600A3.200 3.200 0 1 1 20.500 20.500L18.800 21.500M18 19.500L20.300 20.800 18.300 23.300" fill="none" stroke="#fff" stroke-width="1.300"/></svg></button>
        <button class="tool" disabled aria-label="Изменить подпись"><svg viewBox="0 0 24 24"><use href="#tag"/><text class="tag-text" x="4" y="12.300">abc</text><rect x="13" y="13" width="11" height="11" rx="1.600" fill="#958b52"/><rect x="13.900" y="13.900" width="9.200" height="4.800" fill="#b6b084"/><path d="M22 14L23.200 15.300 18 21.600 17.200 20.800 14.700 23 15.700 19.500 15.200 18.600 16.200 18.700Z" fill="#fff"/></svg></button>
      </div>
      <div class="group grow">
        <span class="grip"></span>
        <button class="tool with-corner" aria-label="Добавить веб-слой"><svg viewBox="0 0 24 24"><use href="#globe"/><use href="#badge-green" x="15" y="15" width="9" height="9"/><path d="M19.500 16.800V22.200M16.800 19.500H22.200" stroke="#fff" stroke-width="1.700" stroke-linecap="round"/></svg><svg class="corner" viewBox="0 0 24 12"><path d="M0 0H24L12 12Z" fill="#222" fill-opacity=".85"/></svg></button>
        <button class="tool" aria-label="Поиск слоёв"><svg viewBox="0 0 24 24"><use href="#globe"/><use href="#badge-green" x="15" y="15" width="9" height="9"/><circle cx="18.900" cy="18.900" r="2.400" fill="none" stroke="#fff" stroke-width="1.100"/><path d="M20.800 20.700L22.600 22.500" stroke="#fff" stroke-width="1.300" stroke-linecap="round"/></svg></button>
        <button class="more" aria-label="Ещё"><svg viewBox="0 0 24 20"><path d="M1.500 1.500L10 10 1.500 18.500M13.500 1.500L22 10 13.500 18.500"/></svg></button>
      </div>
      <div class="group">
        <span class="grip"></span>
        <button class="tool" aria-label="Консоль Python"><svg viewBox="0 0 24 24"><path d="M10.500 2Q15.500 2 15.600 4.500V9.500Q15.500 11.800 13 11.900H8.500Q5.300 12 5.200 15V16.900H3.500Q.700 16.500.700 12 .700 7.500 4 7.100H10.700V6.200H5.800V4.500Q5.900 2 10.500 2Z" fill="#1f73ae"/><circle cx="8" cy="4.500" r=".9" fill="#fff"/><path d="M11 22Q6 22 5.900 19.500V15Q6 12.600 8.500 12.500H13Q16.200 12.400 16.300 9.400V7.100H18Q20.800 7.500 20.800 12 20.800 16.500 17.500 16.900H10.800V17.800H15.700V19.500Q15.600 22 11 22Z" fill="#ffd400"/><circle cx="13.500" cy="19.500" r=".9" fill="#fff"/><path d="M15.700 17.200L21 19.700 15.700 22.300" fill="none" stroke="#5a5a5a" stroke-width="1.300"/></svg></button>
        <button class="more more-tight" aria-label="Ещё"><svg viewBox="0 0 24 20"><path d="M1.500 1.500L10 10 1.500 18.500M13.500 1.500L22 10 13.500 18.500"/></svg></button>
      </div>
      <div class="group">
        <span class="grip"></span>
        <button class="tool" aria-label="Справка"><svg viewBox="0 0 24 24"><rect x="2.200" y="1.600" width="19.400" height="20.300" fill="#6497c9" stroke="#1f1f24" stroke-width=".9"/><path d="M2.500 1.600H7.200V21.900H2.500Z" fill="#2c4157" stroke="#1f1f24" stroke-width=".7"/><text class="question" x="14.300" y="17.500">?</text></svg></button>
      </div>
      <div class="group tail">
        <span class="grip"></span>
      </div>
    </div>
  </div>

  <svg class="marks" viewBox="0 0 6246 1279" aria-hidden="true">
    <g class="frames">
      <path d="M250 555Q450 549 649 554C678 554 691 575 692 600Q688 640 692 680C692 705 675 725 645 727Q450 719 250 728C215 725 205 700 206 675Q209 640 205 600C206 572 222 555 250 555Z"/>
      <rect x="206" y="553" width="487" height="173" rx="46"/>
      <path d="M238 731Q290 724 345 731C370 731 384 750 384 770Q380 815 384 860C382 888 368 900 340 900Q290 907 238 900C208 899 195 880 193 855Q197 815 194 770C196 745 212 731 238 731Z"/>
      <rect x="194" y="727" width="190" height="173" rx="43"/>
      <path d="M425 730Q860 731 1273 725C1302 725 1316 745 1317 772Q1322 815 1318 858C1316 885 1300 900 1270 900H425C400 898 386 880 384 855Q379 815 383 772C386 748 402 730 425 730Z"/>
      <rect x="384" y="727" width="933" height="173" rx="44"/>
      <path d="M1245 555Q1298 561 1352 554C1380 554 1393 575 1395 600Q1389 640 1394 680C1392 708 1380 725 1350 726Q1298 720 1245 727C1215 724 1203 705 1202 680Q1208 640 1202 600C1203 574 1217 555 1245 555Z"/>
      <rect x="1204" y="554" width="189" height="171" rx="44"/>
      <path d="M1584 554Q1980 547 2400 553C2428 554 2444 578 2444 602Q2440 640 2444 680C2443 706 2427 726 2397 726H1580C1550 724 1539 702 1539 678Q1536 640 1538 600C1540 573 1556 555 1584 554Z"/>
      <rect x="1539" y="553" width="904" height="173" rx="46"/>
      <path d="M1390 725H2670C2698 725 2712 745 2712 772Q2707 815 2711 856C2705 886 2697 902 2668 900H1390C1358 897 1346 880 1346 857Q1350 815 1346 772C1347 745 1362 725 1390 725Z"/>
      <rect x="1346" y="726" width="1364" height="174" rx="44"/>
      <path d="M3790 554Q4180 562 4582 555C4612 555 4626 576 4627 600Q4620 640 4626 680C4624 708 4610 724 4580 725Q4180 722 3790 726C3760 724 3746 704 3745 680Q3751 640 3746 600C3747 574 3760 554 3790 554Z"/>
      <rect x="3746" y="552" width="878" height="174" rx="46"/>
      <path d="M4702 554Q4750 549 4792 555C4820 556 4834 578 4833 602Q4828 640 4833 682C4830 708 4815 724 4790 724H4700C4670 722 4658 700 4656 675Q4662 640 4657 598C4659 572 4674 554 4702 554Z"/>
      <rect x="4658" y="553" width="175" height="171" rx="44"/>
      <path d="M4878 554Q4920 560 4965 553C4992 555 5010 578 5010 602Q5005 640 5009 682C5006 708 4992 725 4965 726L4878 724C4850 722 4836 702 4834 678Q4838 640 4834 600C4836 574 4850 554 4878 554Z"/>
      <rect x="4835" y="554" width="174" height="171" rx="44"/>
      <path d="M3942 724Q4450 731 5010 726C5038 726 5051 752 5052 772Q5047 815 5051 856C5047 884 5035 901 5008 900H3942C3914 898 3900 880 3900 857Q3904 815 3900 772C3902 745 3914 728 3942 724Z"/>
      <rect x="3900" y="727" width="1151" height="173" rx="44"/>
    </g>
    <g class="arrows">
      <path d="M450 379L427 547M447 400L429 547M413 485L427 547L455 490"/>
      <path d="M1260 376L1241 542M1256 380L1243 546M1230 485L1240 543M1272 490L1243 546"/>
      <path d="M1957 375L1938 546M1961 380L1939 546M1925 484L1938 546L1967 490"/>
      <path d="M359 1113L300 906M356 1100L304 925M296 971L300 906L337 958"/>
      <path d="M808 1030L837 906M803 960L837 906L844 971"/>
      <path d="M1987 1076L2000 914M1991 1074L2005 918M1978 975L2003 915L2022 978"/>
      <path d="M4115 359L4095 526M4112 375L4100 521M4083 460L4098 523L4126 463"/>
      <path d="M4779 197L4755 526M4778 220L4757 500M4737 462L4755 526L4780 466"/>
      <path d="M5314 385L4984 551M5318 389L4988 552M5026 506L4984 551L5044 545"/>
      <path d="M4469 1031L4476 913M4471 1015L4480 914M4455 968L4478 912L4496 971"/>
    </g>
  </svg>

  <p class="note note-project">Создать, открыть<br>или сохранить проект</p>
  <p class="note note-pan">Прокрутка<br>карты</p>
  <p class="note note-zoom">Масштабирование</p>
  <p class="note note-select">Инструменты выбора объектов</p>
  <p class="note note-info">Отображение информации<br>об объектах</p>
  <p class="note note-calc">Калькулятор полей</p>
  <p class="note note-sources">Управление источниками</p>
  <p class="note note-layers">Создание новых слоев</p>
  <p class="note note-edit">Инструменты редактирования<br>объектов</p>
  <p class="note note-labels">Инструменты работы<br>с подписями</p>
</main>
</body>
</html>
```
FILE: styles.css
```css
* { box-sizing: border-box; }
body { margin: 0; background: #fff; overflow-x: hidden; }
.sprite { position: absolute; width: 0; height: 0; }

.diagram {
  position: relative;
  padding: 344px 18px 230px 113px;
}

.toolbars {
  border-top: 16px solid #e9edee;
  border-bottom: 11px solid #f5f5f5;
}
.row {
  display: flex;
  background: linear-gradient(#f6f6f6, #ebebeb);
}
.row-top { height: 117px; border-top: 2px solid #d2d4d4; }
.row-bottom { height: 120px; }
.row-bottom .group { padding-top: 3px; }

.group {
  display: flex;
  align-items: center;
  padding-right: 10px;
  border-bottom: 3px solid #b4b4b4;
}
.group + .group { margin-left: 1px; }
.grow { flex: 1; }

.grip {
  width: 38px;
  height: 50px;
  padding-left: 15px;
  display: flex;
  gap: 1px;
}
.group:first-child .grip { width: 35px; padding-left: 12px; }
.grip::before, .grip::after {
  content: "";
  width: 8px;
  background:
    linear-gradient(#bcbcbc 3px, transparent 3px) 0 0 / 3px 9px repeat-y,
    linear-gradient(transparent 1px, #f8f8f8 1px, #f8f8f8 6px, transparent 6px) 0 0 / 7px 9px repeat-y;
}

button {
  display: flex;
  align-items: center;
  justify-content: center;
  flex: none;
  margin: 0;
  padding: 0;
  border: 0;
  background: none;
}
.tool { width: 101px; height: 96px; position: relative; }
.tool > svg { width: 74px; height: 74px; overflow: visible; }
.tool-on { background: #d8d8d8; border: 3px solid #a8a8a8; border-radius: 9px; width: 97px; margin: 0 2px; }
.tool:disabled > svg, .dim { opacity: .32; filter: grayscale(.65); }
.tool > .corner { position: absolute; right: 7px; bottom: 9px; width: 18px; height: 9px; }

.drop { width: 37px; height: 96px; padding-right: 5px; }
.drop svg { width: 24px; height: 12px; }

.more { width: 33px; height: 60px; margin-left: auto; margin-right: -2px; }
.more-tight { margin-left: 4px; margin-right: 0; }
.more svg { width: 23px; height: 19px; }
.more path { fill: none; stroke: #3c3c3c; stroke-width: 3px; }

.divider { width: 3px; height: 58px; margin: 0 9px 0 10px; background: #dadada; border-right: 1px solid #fff; }
.tail { width: 49px; padding-right: 0; }

.tag-text { font: 600 7px "Inter", "Liberation Sans", sans-serif; fill: #222; }
.ink { fill: #333; }
.crimson { fill: #e01020; }
.style-letter { font: 10px "Noto Sans", sans-serif; fill: #444; }
.ratio { font: bold 9px "Liberation Sans", sans-serif; fill: #222; text-anchor: middle; }
.question { font: 15px "Liberation Serif", serif; fill: #fff; text-anchor: middle; }

.marks { position: absolute; left: 0; top: 0; width: 100%; pointer-events: none; }
.frames { fill: none; stroke: #e03131; stroke-width: 10px; }
.arrows { fill: none; stroke: #1e1e1e; stroke-width: 6px; stroke-linecap: round; stroke-linejoin: round; }

.note {
  position: absolute;
  margin: 0;
  transform: translateX(-50%);
  color: #1e1e1e;
  font: 500 43px/57px "Noto Sans", sans-serif;
  text-align: center;
  white-space: nowrap;
}
.note-project { left: 7.2%; top: 131px; }
.note-pan { left: 20%; top: 131px; }
.note-zoom { left: 31.4%; top: 189px; }
.note-select { left: 65.9%; top: 175px; }
.note-info { left: 76.4%; top: 14px; }
.note-calc { left: 85.4%; top: 192px; }
.note-sources { left: 7%; top: 751px; }
.note-layers { left: 13.6%; top: 671px; }
.note-edit { left: 31.7%; top: 706px; }
.note-labels { left: 71.4%; top: 681px; }
```
